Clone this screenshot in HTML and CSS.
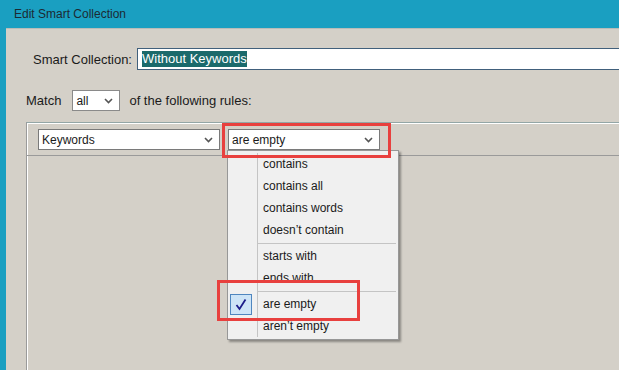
FILE: index.html
```html
<!DOCTYPE html>
<html lang="en">
<head>
  <meta charset="UTF-8">
  <title>Edit Smart Collection</title>
  <link rel="stylesheet" href="styles.css">
</head>
<body>
  <div class="dialog">
    <header class="titlebar">Edit Smart Collection</header>

    <div class="client">
      <div class="name-row">
        <label for="name">Smart Collection:</label>
        <div class="name-input" id="name"><span class="selected">Without Keywords</span></div>
      </div>

      <div class="match-row">
        <span>Match</span>
        <div class="select select-match">
          <span>all</span>
          <svg class="chev" width="9" height="6" viewBox="0 0 9 6"><polyline points="1,1 4.5,4.5 8,1" fill="none" stroke="#555" stroke-width="1.6"/></svg>
        </div>
        <span>of the following rules:</span>
      </div>

      <div class="rules">
        <div class="rules-head">
          <div class="select select-field">
            <span>Keywords</span>
            <svg class="chev" width="9" height="6" viewBox="0 0 9 6"><polyline points="1,1 4.5,4.5 8,1" fill="none" stroke="#555" stroke-width="1.6"/></svg>
          </div>
          <div class="select select-op">
            <span>are empty</span>
            <svg class="chev" width="9" height="6" viewBox="0 0 9 6"><polyline points="1,1 4.5,4.5 8,1" fill="none" stroke="#555" stroke-width="1.6"/></svg>

            <ul class="menu">
              <li>contains</li>
              <li>contains all</li>
              <li>contains words</li>
              <li>doesn’t contain</li>
              <li class="sep"></li>
              <li>starts with</li>
              <li>ends with</li>
              <li class="sep"></li>
              <li class="checked">
                <span class="check"><svg width="12" height="13" viewBox="0 0 12 13"><polyline points="1.5,7 4.5,11 10.5,1.5" fill="none" stroke="#1c1c8a" stroke-width="1.8"/></svg></span>are empty
              </li>
              <li>aren’t empty</li>
            </ul>
          </div>
        </div>
      </div>
    </div>

    <!-- annotation boxes -->
    <div class="mark mark-select"></div>
    <div class="mark mark-item"></div>
  </div>
</body>
</html>
```

FILE: styles.css
```css
html, body {
  margin: 0;
  height: 100%;
}

body {
  background-color: #1a9fc1;
  font-family: 'Liberation Sans', Arial, sans-serif;
  color: #1a1a1a;
  overflow: hidden;
}

.dialog {
  position: relative;
  height: 100%;
}

.titlebar {
  height: 28px;
  line-height: 28px;
  padding-left: 14px;
  font-size: 12px;
  color: #1c2a33;
}

.client {
  margin-left: 6px;
  height: 342px;
  background-color: #d4d0c8;
  border-top: 1px solid #b9bcb8;
  overflow: hidden;
}

.name-row {
  display: flex;
  align-items: center;
  padding: 19px 0 0 27px;
  font-size: 13px;
}

.name-row label {
  flex: none;
  width: 104px;
}

.name-input {
  flex: none;
  width: 600px;
  height: 20px;
  background: #ffffff;
  border: 1px solid #41607c;
  display: flex;
  align-items: center;
  padding-left: 4px;
}

.selected {
  background-color: #1b6a6b;
  color: #ffffff;
  line-height: 16px;
}

.match-row {
  display: flex;
  align-items: center;
  gap: 9px;
  padding: 20px 0 0 20px;
  font-size: 13px;
}

.match-row span:first-child {
  margin-right: 2px;
}

.select {
  flex: none;
  height: 19px;
  background: #ffffff;
  border: 1px solid #7a7a7a;
  display: flex;
  align-items: center;
  justify-content: space-between;
  padding: 0 6px 0 3px;
  font-size: 12px;
  box-sizing: content-box;
}

.select-match {
  width: 37px;
  border-color: #8a8a8a;
}

.select-field {
  width: 171px;
}

.select-op {
  width: 141px;
  position: relative;
}

.chev {
  display: block;
}

.rules {
  margin: 11px 0 0 20px;
  width: 700px;
  height: 260px;
  border-top: 1px solid #93a6a6;
  border-left: 1px solid #9a9a9a;
  box-shadow: inset 1px 1px 0 #ffffff;
}

.rules-head {
  display: flex;
  gap: 8px;
  height: 26px;
  padding: 6px 0 0 11px;
  border-bottom: 1px solid #9a9a9a;
}

.menu {
  position: absolute;
  left: -2px;
  top: 20px;
  width: 170px;
  margin: 0;
  padding: 2px 0;
  list-style: none;
  background: #f0f0f0;
  border: 1px solid #979797;
  box-shadow: 2px 2px 2px rgba(0, 0, 0, 0.35);
  z-index: 2;
}

.menu::before {
  content: "";
  position: absolute;
  left: 29px;
  top: 2px;
  bottom: 2px;
  width: 1px;
  background: #c4c4c4;
}

.menu li {
  position: relative;
  height: 22px;
  line-height: 22px;
  padding-left: 35px;
  font-size: 12px;
}

.menu li.sep {
  height: 1px;
  margin: 2px 2px 1px 30px;
  padding: 0;
  background: #c4c4c4;
}

.check {
  position: absolute;
  left: 2px;
  top: 1px;
  width: 20px;
  height: 19px;
  display: flex;
  align-items: center;
  justify-content: center;
  background: #cde4f7;
  border: 1px solid #4f86bf;
}

.mark {
  position: absolute;
  border: 3px solid #e8403e;
  box-sizing: border-box;
  z-index: 3;
}

.mark-select {
  left: 222px;
  top: 123px;
  width: 169px;
  height: 35px;
}

.mark-item {
  left: 217px;
  top: 280px;
  width: 143px;
  height: 41px;
}
```
